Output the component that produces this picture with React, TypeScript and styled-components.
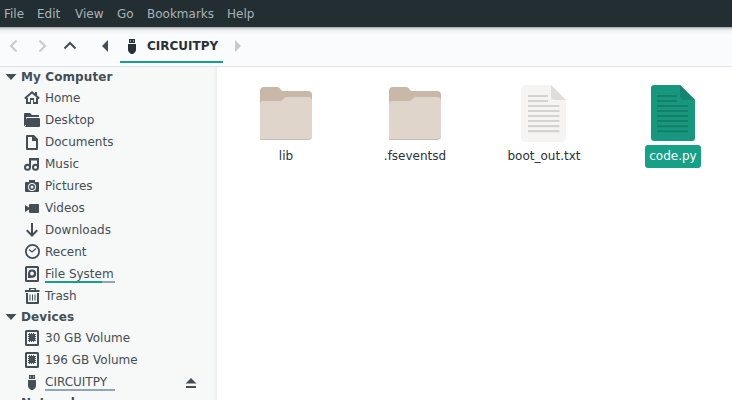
import React from 'react';
import styled, { createGlobalStyle } from 'styled-components';

const Global = createGlobalStyle`
  * { box-sizing: border-box; }
  body { margin: 0; overflow: hidden; font: 12px "DejaVu Sans", sans-serif; color: #263238; }
  svg { display: block; flex: none; }
`;

const Window = styled.div`
  height: 400px;
  display: flex;
  flex-direction: column;
  overflow: hidden;
  background: #fff;
`;

const MenuBar = styled.nav`
  height: 27px;
  flex: none;
  display: flex;
  padding-left: 4px;
  background: #232e32;
  color: #a9b3b7;
  line-height: 28px;
`;

const MenuItem = styled.span<{ $width: number }>`
  width: ${(p) => p.$width}px;
  white-space: nowrap;
`;

const PathBar = styled.header`
  height: 40px;
  flex: none;
  display: flex;
  background: linear-gradient(#a3a7aa 0, #dfe1e3 2px, #f1f2f4 4px, #fafbfd 8px);
  border-bottom: 1px solid #dfe2e5;
`;

const NavButton = styled.span<{ $width: number; $muted?: boolean }>`
  width: ${(p) => p.$width}px;
  height: 38px;
  display: flex;
  align-items: center;
  justify-content: center;
  color: ${(p) => (p.$muted ? '#c6cacd' : '#414c54')};
`;

const ScrollBack = styled(NavButton)`
  padding-left: 6px;
`;

const CurrentFolder = styled.div`
  width: 103px;
  height: 36px;
  display: flex;
  align-items: center;
  padding: 3px 0 0 4px;
  gap: 7px;
  border-bottom: 2px solid #16a085;
  font-weight: bold;
  white-space: nowrap;
  color: #263238;
`;

const Body = styled.div`
  flex: 1;
  min-height: 0;
  display: flex;
`;

const Sidebar = styled.aside`
  width: 217px;
  flex: none;
  overflow: hidden;
  background: linear-gradient(90deg, transparent 213px, #eceeee 217px), #f7f9f9;
  color: #434e56;
`;

const SectionTitle = styled.div`
  height: 20px;
  display: flex;
  align-items: center;
  padding-left: 5px;
  gap: 4px;
  font-weight: bold;
  letter-spacing: 0.1px;
`;

const Place = styled.div`
  height: 22px;
  display: flex;
  align-items: center;
  padding: 0 18px 0 24px;
  gap: 5px;
`;

const PlaceName = styled.span<{ $used?: number }>`
  height: 22px;
  width: 70px;
  line-height: 22px;
  white-space: nowrap;
  background: ${(p) =>
    p.$used === undefined
      ? 'none'
      : `linear-gradient(90deg, #16a085 ${p.$used}px, #94a3b5 ${p.$used}px) 0 18px / 70px 2px no-repeat`};
`;

const Eject = styled.span`
  margin-left: auto;
`;

const Files = styled.main`
  flex: 1;
  display: grid;
  grid-template-columns: repeat(4, 129px);
  align-content: start;
  padding: 14px 0 0 4px;
`;

const FileItem = styled.figure`
  margin: 0;
  display: flex;
  flex-direction: column;
  align-items: center;
`;

const FileName = styled.figcaption<{ $selected?: boolean }>`
  height: 23px;
  line-height: 22px;
  margin-left: 1px;
  padding: 0 4px;
  border-radius: 3px;
  background: ${(p) => (p.$selected ? '#16a085' : 'none')};
  color: ${(p) => (p.$selected ? '#fff' : '#263238')};
`;

const icons: Record<string, React.ReactNode> = {
  home: (
    <>
      <path d="M.8 8.500 8 2.300l7.200 6.200" fill="none" stroke="currentColor" strokeWidth="2" />
      <path d="M11 2h2v4h-2zM2 8h2v4h2V8h4v4h2V8h2v6H9v-4H7v4H2z" />
    </>
  ),
  desktop: (
    <>
      <path d="M0 2q0-1 1-1h5l2 2h6q1 0 1 1v1H3q-1 0-1 1v7H1v1q-1 0-1-1z" />
      <path d="M3.500 6H15q1 0 1 1v7q0 1-1 1H2q-1 0-1-1h1V7.500Q2 6 3.500 6z" />
    </>
  ),
  documents: <path d="M3 1h7l4 4v10q0 1-1 1H3q-1 0-1-1V2q0-1 1-1zm1 2v11h8V7H8V3z" fillRule="evenodd" />,
  music: (
    <>
      <path d="M5 2h10v9h-2V4.500H7V11H5z" />
      <g fill="none" stroke="currentColor" strokeWidth="2">
        <circle cx="3.500" cy="11.200" r="2.500" />
        <circle cx="11.500" cy="11.200" r="2.500" />
      </g>
    </>
  ),
  pictures: (
    <path
      d="M5 2h6v2h3q1 0 1 1v8q0 1-1 1H2q-1 0-1-1V5q0-1 1-1h3zM8 5a4 4 0 1 0 0 8 4 4 0 0 0 0-8zM8 6a3 3 0 1 1 0 6 3 3 0 0 1 0-6zM8 7.500a1.500 1.500 0 1 0 0 3 1.500 1.500 0 0 0 0-3z"
      fillRule="evenodd"
    />
  ),
  videos: <path d="M1 5l4 2.500V5q0-1 1-1h8q1 0 1 1v7q0 1-1 1H6q-1 0-1-1V9.500L1 12z" />,
  downloads: <path d="M8 1v12M2.800 8.300 8 13.500l5.200-5.200" fill="none" stroke="currentColor" strokeWidth="2" />,
  recent: (
    <g fill="none" stroke="currentColor">
      <circle cx="8.500" cy="7.500" r="6.600" strokeWidth="1.800" />
      <path d="M5 5.500l3 2.500 4-3.500" strokeWidth="1.200" />
    </g>
  ),
  filesystem: (
    <>
      <rect x="2" y="1" width="12" height="14" rx=".6" fill="none" stroke="currentColor" strokeWidth="2" />
      <path
        d="M4 12V7.500a4.100 4.100 0 1 1 4.100 4.300L6.500 12zM8 5.600a1.900 1.900 0 1 0 0 3.800 1.900 1.900 0 0 0 0-3.800z"
        fillRule="evenodd"
      />
    </>
  ),
  trash: (
    <path
      d="M5 0h7v2h3.500v2H1V2h4zm1.500 1v1h4V1zM2 5h13v10q0 1-1 1H3q-1 0-1-1zm2 0v9h9V5zM5.500 6.500h1v6h-1zM8 6.500h1v6H8zM10.500 6.500h1v6h-1z"
      fillRule="evenodd"
    />
  ),
  volume: (
    <>
      <rect x="2" y="1" width="12" height="14" rx=".6" fill="none" stroke="currentColor" strokeWidth="2" />
      <rect x="5" y="4" width="6" height="7" />
      <path d="M4 4.500h8M4 6.500h8M4 8.500h8M4 10.500h8M5.500 3v9M7.500 3v9M9.500 3v9" stroke="currentColor" strokeWidth="1" />
    </>
  ),
  usb: (
    <path d="M5 1h6v4H5zM6 2.500v1h1v-1zm3 0v1h1v-1zM4 6h8v6q0 2.500-3 4H7q-3-1.500-3-4z" fillRule="evenodd" />
  ),
};

const Icon = ({ name }: { name: string }) => (
  <svg width="16" height="16" viewBox="0 0 16 16" fill="currentColor">
    {icons[name]}
  </svg>
);

const Chevron = ({ d }: { d: string }) => (
  <svg width="14" height="14" viewBox="0 0 14 14" fill="none" stroke="currentColor" strokeWidth="2">
    <path d={d} />
  </svg>
);

const Disclosure = () => (
  <svg width="12" height="12" viewBox="0 0 12 12" fill="currentColor">
    <path d="M.5 3h11L6 9z" />
  </svg>
);

const FolderArt = () => (
  <svg width="64" height="64" viewBox="0 0 64 64">
    <path d="M6 10q0-4 4-4h13q1.500 0 2.500 1l2.500 3h26q4 0 4 4v24H6z" fill="#c9b7a8" />
    <path d="M6 24q0-4 3-4h17q1.500 0 2.500-1l2-2q1-1 2.500-1h21q4 0 4 4v35q0 4-4 4H6z" fill="#cbbcae" />
    <path d="M6 24q0-4 3-4h17q1.500 0 2.500-1l2-2q1-1 2.500-1h21q4 0 4 4v34q0 4-4 4H6z" fill="#dfd5cb" />
  </svg>
);

const TextArt = () => (
  <svg width="64" height="64" viewBox="0 0 64 64">
    <path d="M14 4h25l15 15v37q0 5-5 5H14q-5 0-5-5V9q0-5 5-5z" fill="#f5f4f2" />
    <path d="M39 4l15 15H43q-4 0-4-4z" fill="#dfdddb" />
    <path d="M16 15h20M16 20h20M16 25h31.500M16 30h31.500M16 35h31.500M16 40h31.500M16 45.200h31.500M16 50.200h31.500" stroke="#d4d3d1" strokeWidth="2.200" />
  </svg>
);

const CodeArt = () => (
  <svg width="64" height="64" viewBox="0 0 64 64">
    <path d="M13 4h26l15 15v38q0 3-3 3H13q-3 0-3-3V7q0-3 3-3z" fill="#17977e" />
    <path d="M39 4l15 15H43q-4 0-4-4z" fill="#14856f" />
    <path d="M16 15h20M16 20h20M16 25h31M16 30h31M16 35h31M16 40h31M16 45.200h31M16 50.200h31" stroke="#148069" strokeWidth="2" />
  </svg>
);

const menus: [string, number][] = [
  ['File', 33],
  ['Edit', 38],
  ['View', 42],
  ['Go', 30],
  ['Bookmarks', 80],
  ['Help', 40],
];

const computer: { name: string; icon: string; used?: number }[] = [
  { name: 'Home', icon: 'home' },
  { name: 'Desktop', icon: 'desktop' },
  { name: 'Documents', icon: 'documents' },
  { name: 'Music', icon: 'music' },
  { name: 'Pictures', icon: 'pictures' },
  { name: 'Videos', icon: 'videos' },
  { name: 'Downloads', icon: 'downloads' },
  { name: 'Recent', icon: 'recent' },
  { name: 'File System', icon: 'filesystem', used: 57 },
  { name: 'Trash', icon: 'trash' },
];

const files = [
  { name: 'lib', art: <FolderArt /> },
  { name: '.fseventsd', art: <FolderArt /> },
  { name: 'boot_out.txt', art: <TextArt /> },
  { name: 'code.py', art: <CodeArt />, selected: true },
];

export default function App() {
  return (
    <Window>
      <Global />
      <MenuBar>
        {menus.map(([label, width]) => (
          <MenuItem key={label} $width={width}>{label}</MenuItem>
        ))}
      </MenuBar>
      <PathBar>
        <NavButton $width={28} $muted><Chevron d="M9.500 1.500 4 7l5.500 5.500" /></NavButton>
        <NavButton $width={28} $muted><Chevron d="M4.500 1.500 10 7l-5.500 5.500" /></NavButton>
        <NavButton $width={28}><Chevron d="M1.500 9.500 7 4l5.500 5.500" /></NavButton>
        <ScrollBack $width={36}>
          <svg width="6" height="12" viewBox="0 0 6 12" fill="currentColor"><path d="M6 0v12L0 6z" /></svg>
        </ScrollBack>
        <CurrentFolder>
          <Icon name="usb" />
          CIRCUITPY
        </CurrentFolder>
        <NavButton $width={30} $muted>
          <svg width="6" height="12" viewBox="0 0 6 12" fill="currentColor"><path d="M0 0l6 6-6 6z" /></svg>
        </NavButton>
      </PathBar>
      <Body>
        <Sidebar>
          <SectionTitle><Disclosure />My Computer</SectionTitle>
          {computer.map((p) => (
            <Place key={p.name}>
              <Icon name={p.icon} />
              <PlaceName $used={p.used}>{p.name}</PlaceName>
            </Place>
          ))}
          <SectionTitle><Disclosure />Devices</SectionTitle>
          <Place><Icon name="volume" /><PlaceName>30 GB Volume</PlaceName></Place>
          <Place><Icon name="volume" /><PlaceName>196 GB Volume</PlaceName></Place>
          <Place>
            <Icon name="usb" />
            <PlaceName $used={0}>CIRCUITPY</PlaceName>
            <Eject>
              <svg width="16" height="16" viewBox="0 0 16 16" fill="currentColor">
                <path d="M8 4l5.500 5.500h-11zM3 12h10v2H3z" />
              </svg>
            </Eject>
          </Place>
          <SectionTitle><Disclosure />Network</SectionTitle>
        </Sidebar>
        <Files>
          {files.map((f) => (
            <FileItem key={f.name}>
              {f.art}
              <FileName $selected={f.selected}>{f.name}</FileName>
            </FileItem>
          ))}
        </Files>
      </Body>
    </Window>
  );
}
